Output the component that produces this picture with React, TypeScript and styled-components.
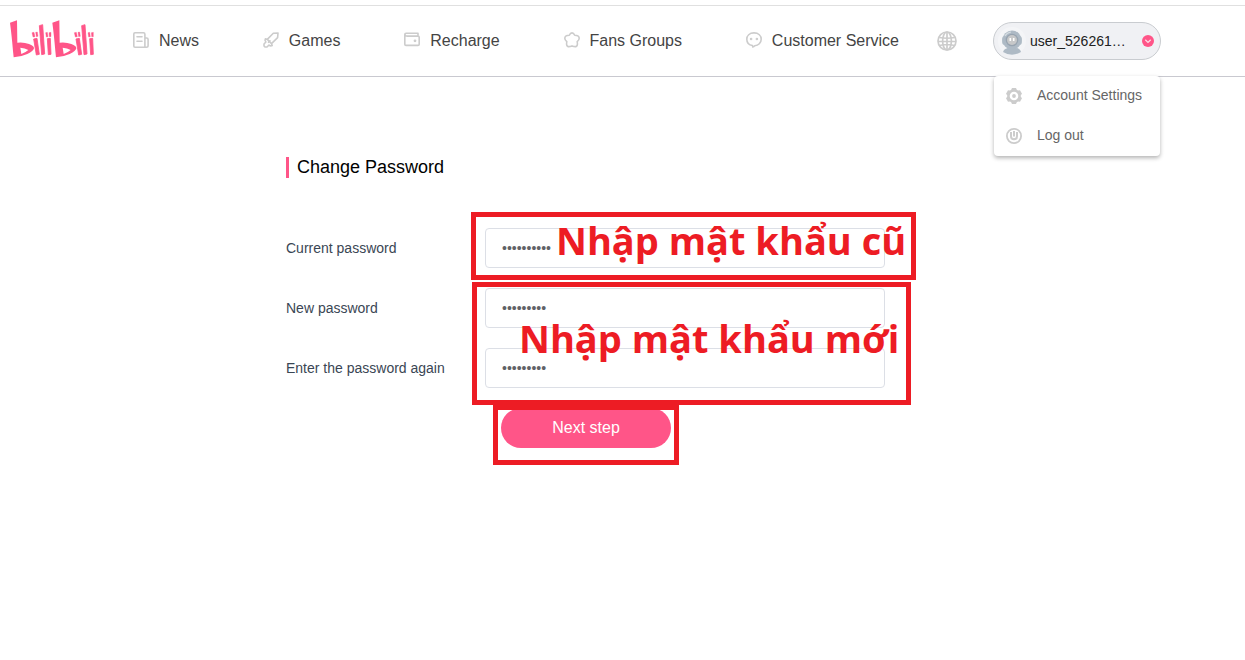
import React from 'react';
import styled, { createGlobalStyle } from 'styled-components';

const pink = '#ff5588';
const iconGrey = '#cccccc';

const GlobalStyle = createGlobalStyle`
  * { box-sizing: border-box; }
  body {
    margin: 0;
    background: #fff;
    font-family: "Liberation Sans", Arial, sans-serif;
  }
`;

const Header = styled.header`
  display: flex;
  align-items: center;
  height: 72px;
  margin-top: 5px;
  padding: 0 84px 0 10px;
  border-top: 1px solid #e0e0e0;
  border-bottom: 1px solid #c9c9d0;
`;

const LogoLink = styled.a`
  display: block;
  flex: none;
  width: 85px;
  height: 38px;
  margin-bottom: 4px;
  svg { display: block; }
`;

const Nav = styled.nav`
  display: flex;
  flex: 1;
  justify-content: space-between;
  margin: 0 38px;
`;

const NavLink = styled.a`
  display: flex;
  align-items: center;
  gap: 10px;
  color: #444;
  font-size: 16px;
  line-height: 20px;
  text-decoration: none;
  white-space: nowrap;
  svg { margin-bottom: 2px; }
`;

const LanguageButton = styled.button`
  width: 20px;
  height: 20px;
  padding: 0;
  border: 0;
  background: none;
  svg { display: block; }
`;

const Account = styled.div`
  position: relative;
  margin-left: 36px;
`;

const AccountButton = styled.button`
  display: flex;
  align-items: center;
  width: 168px;
  height: 38px;
  padding: 0 6px 0 4px;
  border: 1px solid #c9ccd0;
  border-radius: 19px;
  background: #f0f1f4;
  color: #212121;
  font-family: inherit;
  font-size: 14px;
`;

const UserName = styled.span`
  flex: 1;
  padding-left: 4px;
  text-align: left;
`;

const Menu = styled.div`
  position: absolute;
  top: 54px;
  left: 1px;
  right: 1px;
  border-radius: 4px;
  background: #fff;
  box-shadow: 0 2px 4px rgba(0, 0, 0, 0.3);
`;

const MenuLink = styled.a`
  display: flex;
  align-items: center;
  gap: 15px;
  height: 40px;
  padding-left: 12px;
  color: #666;
  font-size: 14px;
  line-height: 16px;
  text-decoration: none;
  white-space: nowrap;
  span { margin-bottom: 2px; }
`;

const Main = styled.main`
  padding: 80px 84px 80px 10px;
`;

const Form = styled.form`
  display: flex;
  flex-direction: column;
  gap: 20px;
  max-width: 599px;
  margin: 0 auto;
`;

const Title = styled.h1`
  margin: 0 0 30px;
  padding-left: 8px;
  border-left: 3px solid ${pink};
  color: #000;
  font-size: 18px;
  font-weight: 400;
  line-height: 21px;
`;

const FieldGroup = styled.div`
  position: relative;
  display: flex;
  flex-direction: column;
  gap: 20px;
`;

const Field = styled.div`
  display: flex;
  align-items: center;
`;

const Label = styled.label`
  width: 199px;
  color: #3a4654;
  font-size: 14px;
  line-height: 16px;
`;

const PasswordInput = styled.input`
  flex: 1;
  min-width: 0;
  height: 40px;
  padding: 0 16px;
  border: 1px solid #dcdfe6;
  border-radius: 4px;
  background: #fff;
  color: #606266;
  font-family: inherit;
  font-size: 14px;
`;

const Actions = styled.div`
  position: relative;
  padding-left: 215px;
`;

const SubmitButton = styled.button`
  display: block;
  width: 170px;
  height: 40px;
  border: 0;
  border-radius: 20px;
  background: ${pink};
  color: #fff;
  font-family: inherit;
  font-size: 16px;
`;

const Callout = styled.div<{ $top: number; $left: number; $width: number; $height: number; $indent?: number }>`
  position: absolute;
  top: ${p => p.$top}px;
  left: ${p => p.$left}px;
  width: ${p => p.$width}px;
  height: ${p => p.$height}px;
  padding-left: ${p => p.$indent ?? 0}px;
  display: flex;
  align-items: center;
  border: 5px solid #ed1c24;
  color: #ed1c24;
  font-family: "Open Sans", "Noto Sans", sans-serif;
  font-size: 38px;
  font-weight: 700;
  line-height: 52px;
  white-space: nowrap;
  pointer-events: none;
`;

const CalloutText = styled.span`
  margin-bottom: 12px;
`;

const LogoHalf = () => (
  <>
    <path fillRule="evenodd" d="M30 67 51 60 52 127Q72 125 87 131 102 136 102 144 101 152 82 161 62 170 41 171L39 152Q35 104 30 67ZM61 142 64 161Q76 157 85 149 75 143 61 142Z" />
    <path d="M101 116 111 114 118 162 109 164ZM118 76 128 73 134 161 125 163ZM142 115 151 114 153 162 145 163Z" stroke={pink} strokeWidth="2.500" strokeLinejoin="round" />
    <path d="M96 97 102 96 105 109 99 110ZM107 96 112 95 114 108 109 109ZM137 97 142 96 144 109 139 110ZM147 97 153 96 153 109 148 109Z" stroke={pink} />
  </>
);

const Logo = () => (
  <svg width="85" height="38" viewBox="30 59 255 114" fill={pink} aria-hidden="true">
    <LogoHalf />
    <g transform="translate(127 0)"><LogoHalf /></g>
  </svg>
);

const LineIcon = ({ children }: { children: React.ReactNode }) => (
  <svg width="16" height="16" viewBox="0 0 16 16" fill="none" stroke={iconGrey} strokeWidth="1.6" strokeLinejoin="round" strokeLinecap="round" aria-hidden="true">
    {children}
  </svg>
);

const NewsIcon = () => (
  <LineIcon>
    <path d="M1.9.8H10.500Q11.900.8 11.900 2.200V15.200H2Q.8 15.200.8 14V2Q.8.8 2 .8ZM12 6H13.600Q15.100 6 15.100 7.500V13.500Q15.100 15.200 13.400 15.200H11.900M4 4.700H9M4 9.200H6.500M7.500 9.200H9" />
  </LineIcon>
);

const GamesIcon = () => (
  <LineIcon>
    <path d="M15 1 10.300 1.300 4.300 7.400 8.500 11.600 14.600 5.700ZM2.500 6.800 4.200 7.500M8.500 11.700 9.200 13.600M2.300 7Q1.500 8.500 2.900 10L1 12 1 14 2 15 4 15 6 13Q7.500 14.500 9 13.600M5.500 10.300 7 8.800" />
  </LineIcon>
);

const WalletIcon = () => (
  <LineIcon>
    <path d="M14 3.400V1.200H2Q.8 1.200.8 2.600V12.300Q.8 13.400 2 13.400H14Q15.200 13.400 15.200 12.300V5.300Q15.200 4.100 14 4.100H3.500Q1.200 4.100 1 2.500" />
    <circle cx="11" cy="8.800" r=".6" fill={iconGrey} />
  </LineIcon>
);

const FansIcon = () => (
  <LineIcon>
    <path d="M8 .9Q9.700.9 10.700 3.200Q15.200 3.200 15.200 6.200Q15.200 7.900 13.200 9.700Q14 14.100 11.900 14.600Q10.400 14.900 8 13.900Q5.600 14.900 4.100 14.600Q2 14.100 2.800 9.700Q.8 7.900.8 6.200Q.8 3.200 5.300 3.200Q6.300.9 8 .9Z" />
  </LineIcon>
);

const ServiceIcon = () => (
  <LineIcon>
    <path d="M8 .9C12.500.9 15.200 3.700 15.200 7.200C15.200 10.900 12.300 13.500 8.800 13.700Q8 15 6.800 15L6.500 13.500C3.200 13 .8 10.600.8 7.200C.8 3.700 3.500.9 8 .9Z" />
    <circle cx="5.100" cy="7" r=".5" fill={iconGrey} />
    <circle cx="10.900" cy="7" r=".5" fill={iconGrey} />
  </LineIcon>
);

const GlobeIcon = () => (
  <svg width="20" height="20" viewBox="0 0 20 20" fill="none" stroke={iconGrey} strokeWidth="1.700" aria-hidden="true">
    <circle cx="10" cy="10" r="9" />
    <ellipse cx="10" cy="10" rx="4.400" ry="9" />
    <path d="M10 1V19M2.200 6.500Q10 8 17.800 6.500M1 10.500H19M2.500 14.500Q10 12.500 17.500 14.500" />
  </svg>
);

const Avatar = () => (
  <svg width="28" height="28" viewBox="0 0 28 28" aria-hidden="true">
    <circle cx="14" cy="14" r="14" fill="#f4f5f7" />
    <path d="M5 25Q6 20.500 14 20.500T23 25Q19 27.700 14 27.700T5 25Z" fill="#aebac5" />
    <rect x="4" y="9" width="20" height="9" rx="3" fill="#b9c4cd" />
    <circle cx="14" cy="13" r="9.500" fill="#aebac5" />
    <path d="M7 9Q9 5.500 13 5" fill="none" stroke="#d5dce1" strokeWidth="1.200" />
    <circle cx="14" cy="13" r="6.300" fill="#98a4b0" />
    <circle cx="14" cy="13" r="5" fill="#c7c8c9" />
    <path d="M12.300 11V14M15.700 11V14" stroke="#fff" strokeWidth="1.600" />
  </svg>
);

const ChevronBadge = () => (
  <svg width="12" height="12" viewBox="0 0 12 12" aria-hidden="true">
    <circle cx="6" cy="6" r="6" fill={pink} />
    <path d="M3.300 4.800 6 7.400 8.700 4.800" fill="none" stroke="#ffdce6" strokeWidth="1.300" />
  </svg>
);

const GearIcon = () => (
  <svg width="16" height="16" viewBox="0 0 16 16" aria-hidden="true">
    <path fillRule="evenodd" fill={iconGrey} d="M6 0H10L10.800 1.800 12 2.500 14 2.300 16 5.700 14.800 7.200V8.800L16 10.300 14 13.700 12 13.500 10.800 14.200 10 16H6L5.200 14.200 4 13.500 2 13.700 0 10.300 1.200 8.800V7.200L0 5.700 2 2.300 4 2.500 5.200 1.800ZM8 3.700A4.300 4.300 0 1 0 8 12.300A4.300 4.300 0 1 0 8 3.700Z" />
    <circle cx="8" cy="8" r="1.900" fill={iconGrey} />
  </svg>
);

const PowerIcon = () => (
  <svg width="16" height="16" viewBox="0 0 16 16" fill="none" stroke={iconGrey} aria-hidden="true">
    <circle cx="8" cy="8" r="7.100" strokeWidth="1.800" />
    <path d="M5 4V8.300A3 3 0 0 0 11 8.300V4" strokeWidth="2" />
    <path d="M8 3V8.500" strokeWidth="2" />
  </svg>
);

const navItems = [
  { text: 'News', Icon: NewsIcon },
  { text: 'Games', Icon: GamesIcon },
  { text: 'Recharge', Icon: WalletIcon },
  { text: 'Fans Groups', Icon: FansIcon },
  { text: 'Customer Service', Icon: ServiceIcon },
];

const PasswordField = ({ id, label, value }: { id: string; label: string; value: string }) => (
  <Field>
    <Label htmlFor={id}>{label}</Label>
    <PasswordInput id={id} type="password" defaultValue={value} />
  </Field>
);

export default function App() {
  return (
    <>
      <GlobalStyle />
      <Header>
        <LogoLink href="#" aria-label="bilibili"><Logo /></LogoLink>
        <Nav>
          {navItems.map(({ text, Icon }) => (
            <NavLink href="#" key={text}><Icon />{text}</NavLink>
          ))}
        </Nav>
        <LanguageButton type="button" aria-label="Language"><GlobeIcon /></LanguageButton>
        <Account>
          <AccountButton type="button">
            <Avatar />
            <UserName>user_526261…</UserName>
            <ChevronBadge />
          </AccountButton>
          <Menu>
            <MenuLink href="#"><GearIcon /><span>Account Settings</span></MenuLink>
            <MenuLink href="#"><PowerIcon /><span>Log out</span></MenuLink>
          </Menu>
        </Account>
      </Header>
      <Main>
        <Form onSubmit={e => e.preventDefault()}>
          <Title>Change Password</Title>
          <FieldGroup>
            <PasswordField id="current" label="Current password" value="0123456789" />
            <Callout $top={-16} $left={185} $width={445} $height={68} $indent={80}>
              <CalloutText>Nhập mật khẩu cũ</CalloutText>
            </Callout>
          </FieldGroup>
          <FieldGroup>
            <PasswordField id="new" label="New password" value="012345678" />
            <PasswordField id="repeat" label="Enter the password again" value="012345678" />
            <Callout $top={-6} $left={186} $width={439} $height={123} $indent={42}>
              <CalloutText>Nhập mật khẩu mới</CalloutText>
            </Callout>
          </FieldGroup>
          <Actions>
            <SubmitButton type="submit">Next step</SubmitButton>
            <Callout $top={-3} $left={207} $width={186} $height={60} />
          </Actions>
        </Form>
      </Main>
    </>
  );
}
